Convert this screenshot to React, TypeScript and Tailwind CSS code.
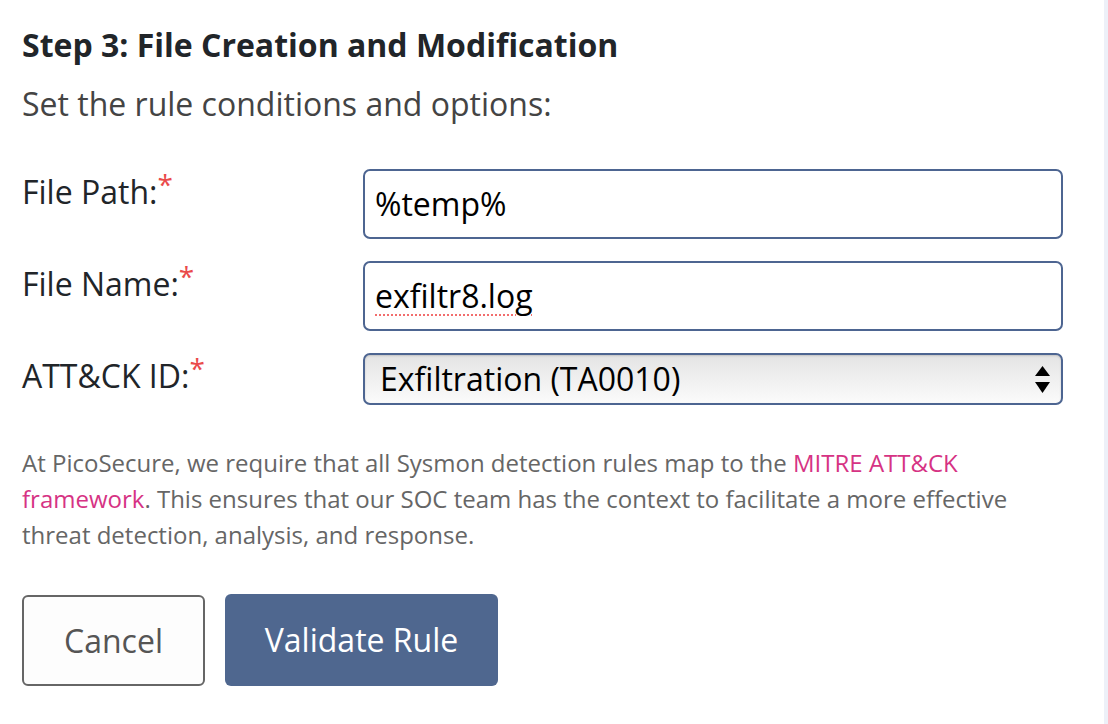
export default function App() {
    return (
        <div className="w-[1108px] h-[724px] flex bg-white font-['Open_Sans',sans-serif] overflow-hidden">
            <div className="w-[1104px] pl-[22px] pr-[41px] pt-[23px]">
                <h2 className="text-[32px] leading-[44px] font-bold text-[#212529]">Step 3: File Creation and Modification</h2>
                <p className="mt-[15px] text-[32px] leading-[44px] text-[#444]">Set the rule conditions and options:</p>

                <div className="mt-[43px] flex flex-col gap-[22px]">
                    <div className="flex">
                        <Label text="File Path:" />
                        <div className="flex-1 h-[70px] border-2 border-[#4d6591] rounded-[7px] px-[10px] flex items-center text-[32px] text-black">
                            %temp%
                        </div>
                    </div>
                    <div className="flex">
                        <Label text="File Name:" />
                        <div className="flex-1 h-[70px] border-2 border-[#4d6591] rounded-[7px] px-[10px] flex items-center text-[32px] text-black">
                            <span className="underline decoration-dotted decoration-[#f26d6d] decoration-2 underline-offset-[6px]">exfiltr8.log</span>
                        </div>
                    </div>
                    <div className="flex">
                        <Label text="ATT&CK ID:" />
                        <div className="flex-1 h-[52px] border-2 border-[#4d6591] rounded-[7px] pl-[15px] pr-[11px] flex items-center justify-between text-[32px] text-black bg-gradient-to-b from-[#e4e4e4] to-[#fbfbfb] shadow-[inset_0_1px_2px_rgba(0,0,0,0.15)]">
                            <span>Exfiltration (TA0010)</span>
                            <svg viewBox="0 0 15 27" className="w-[15px] h-[27px] flex-none">
                                <polygon points="7.5,0 15,10 0,10" fill="#000" />
                                <polygon points="0,16 15,16 7.5,27" fill="#000" />
                            </svg>
                        </div>
                    </div>
                </div>

                <p className="mt-[40px] text-[24px] leading-[36px] text-[#666]">
                    At PicoSecure, we require that all Sysmon detection rules map to the{" "}
                    <a href="#" className="text-[#d63384]">MITRE ATT&amp;CK framework</a>. This ensures that our SOC team has the context to facilitate a more effective threat detection, analysis, and response.
                </p>

                <div className="mt-[42px] flex gap-[20px]">
                    <button className="w-[183px] h-[91px] border-2 border-[#666] rounded-[6px] bg-[#fdfdfd] text-[32px] text-[#555]">Cancel</button>
                    <button className="w-[273px] h-[92px] -mt-[1px] rounded-[6px] bg-[#4f678f] text-[32px] text-white">Validate Rule</button>
                </div>
            </div>
            <div className="flex-1 bg-[#edf0f8]" />
        </div>
    );
}

function Label({ text }: { text: string }) {
    return (
        <div className="w-[341px] pt-[3px] text-[32px] leading-[40px] text-[#212529]">
            {text}
            <span className="text-[#ea4a4a] align-top text-[28px] leading-[24px]">*</span>
        </div>
    );
}
